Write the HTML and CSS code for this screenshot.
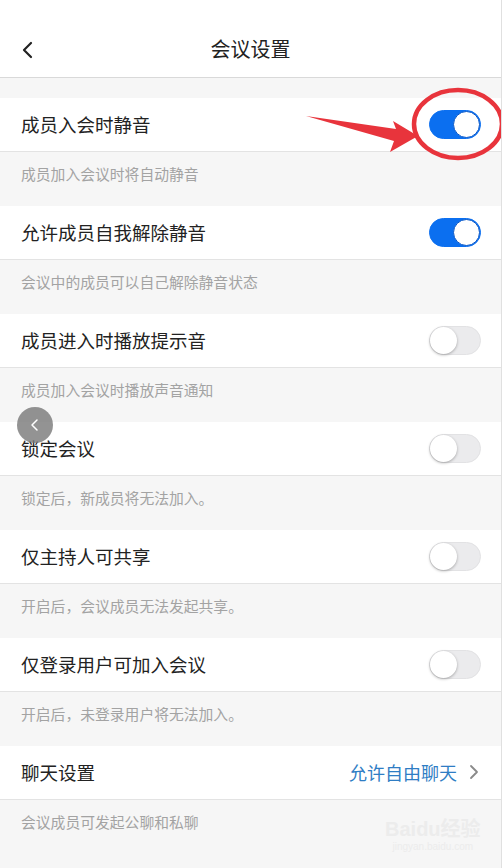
FILE: index.html
```html
<!DOCTYPE html>
<html lang="zh-CN">
<head>
  <meta charset="UTF-8">
  <title>会议设置</title>
  <link rel="stylesheet" href="styles.css">
</head>
<body>
  <div class="page">
    <header class="nav">
      <svg class="back" width="14" height="20" viewBox="0 0 14 20"><path d="M11 3 L4 10 L11 17" fill="none" stroke="#222" stroke-width="2.2" stroke-linecap="round" stroke-linejoin="round"/></svg>
      <h1 class="title">会议设置</h1>
      <span></span>
    </header>

    <div class="spacer"></div>

    <div class="row">
      <span class="label">成员入会时静音</span>
      <span class="switch on"><span class="knob"></span></span>
    </div>
    <div class="desc">成员加入会议时将自动静音</div>

    <div class="row">
      <span class="label">允许成员自我解除静音</span>
      <span class="switch on"><span class="knob"></span></span>
    </div>
    <div class="desc">会议中的成员可以自己解除静音状态</div>

    <div class="row">
      <span class="label">成员进入时播放提示音</span>
      <span class="switch"><span class="knob"></span></span>
    </div>
    <div class="desc">成员加入会议时播放声音通知</div>

    <div class="row">
      <span class="label">锁定会议</span>
      <span class="switch"><span class="knob"></span></span>
    </div>
    <div class="desc">锁定后，新成员将无法加入。</div>

    <div class="row">
      <span class="label">仅主持人可共享</span>
      <span class="switch"><span class="knob"></span></span>
    </div>
    <div class="desc">开启后，会议成员无法发起共享。</div>

    <div class="row">
      <span class="label">仅登录用户可加入会议</span>
      <span class="switch"><span class="knob"></span></span>
    </div>
    <div class="desc">开启后，未登录用户将无法加入。</div>

    <div class="row">
      <span class="label">聊天设置</span>
      <span class="link">允许自由聊天
        <svg width="10" height="16" viewBox="0 0 10 16"><path d="M2 2 L8 8 L2 14" fill="none" stroke="#8a8a8a" stroke-width="1.8" stroke-linecap="round" stroke-linejoin="round"/></svg>
      </span>
    </div>
    <div class="desc last">会议成员可发起公聊和私聊</div>

    <!-- 标注：红圈和箭头 -->
    <svg class="mark" width="503" height="868" viewBox="0 0 503 868">
      <ellipse cx="458" cy="124" rx="44" ry="34" fill="none" stroke="#e8343c" stroke-width="4.5"/>
      <polygon points="306,116 396,129 393,121 418,136 390,152 394,141" fill="#e8343c"/>
    </svg>

    <!-- 悬浮返回按钮 -->
    <div class="float-back">
      <svg width="12" height="16" viewBox="0 0 12 16"><path d="M8 3 L3 8 L8 13" fill="none" stroke="#fff" stroke-width="1.5" stroke-linecap="round" stroke-linejoin="round"/></svg>
    </div>

    <!-- 水印 -->
    <div class="watermark">
      <span class="wm-main">Bai<b>du</b>经验</span>
      <span class="wm-sub">jingyan.baidu.com</span>
    </div>
  </div>
</body>
</html>
```

FILE: styles.css
```css
body {
  margin: 0;
  background: #fff;
  font-family: "Noto Sans CJK SC", "Noto Sans", sans-serif;
}
.page {
  position: relative;
  width: 501px;
  height: 868px;
  overflow: hidden;
  background: #f6f6f6;
  border-right: 1px solid #e0e0e0;
}
.nav {
  height: 57px;
  padding-top: 20px;
  background: #fff;
  border-bottom: 1px solid #d9d9d9;
  display: grid;
  grid-template-columns: 1fr auto 1fr;
  align-items: center;
}
.back {
  margin-left: 20px;
  margin-top: 2px;
}
.title {
  margin: 0;
  font-size: 20px;
  font-weight: 400;
  color: #222;
}
.spacer {
  height: 20px;
}
.row {
  height: 53px;
  background: #fff;
  border-bottom: 1px solid #e3e3e3;
  display: flex;
  align-items: center;
  justify-content: space-between;
  padding: 0 20px 0 21px;
}
.label {
  font-size: 18.5px;
  line-height: 24px;
  margin-top: -2px;
  color: #222;
}
.desc {
  height: 43px;
  padding: 11px 0 0 21px;
  font-size: 14.8px;
  line-height: 22px;
  color: #a3a3a3;
}
.desc.last {
  height: auto;
}
/* 开关 */
.switch {
  position: relative;
  width: 52px;
  height: 29px;
  border-radius: 15px;
  background: #ebebed;
  box-sizing: border-box;
  border: 1px solid #e2e2e4;
}
.switch .knob {
  position: absolute;
  top: 0;
  left: 0;
  width: 27px;
  height: 27px;
  border-radius: 50%;
  background: #fff;
  box-shadow: 0 1px 3px rgba(0, 0, 0, 0.3);
}
.switch.on {
  background: #0b6ff0;
  border-color: #0b6ff0;
}
.switch.on .knob {
  left: auto;
  right: 0;
  box-shadow: none;
  border: 1.5px solid #0a58c8;
  box-sizing: border-box;
}
.link {
  display: flex;
  align-items: center;
  gap: 12px;
  font-size: 18px;
  line-height: 24px;
  margin-top: -2px;
  color: #2f7dc4;
  margin-right: 2px;
}
.mark {
  position: absolute;
  top: 0;
  left: 0;
  pointer-events: none;
}
.float-back {
  position: absolute;
  left: 17px;
  top: 407px;
  width: 36px;
  height: 36px;
  border-radius: 50%;
  background: rgba(120, 120, 120, 0.8);
  display: flex;
  align-items: center;
  justify-content: center;
}
.watermark {
  position: absolute;
  left: 385px;
  top: 818px;
  display: flex;
  flex-direction: column;
  align-items: center;
  color: #ececec;
  font-family: "Liberation Sans", "Noto Sans CJK SC", sans-serif;
}
.wm-main {
  font-size: 20px;
  font-weight: 700;
  line-height: 22px;
}
.wm-sub {
  font-size: 10px;
  line-height: 14px;
}
```
